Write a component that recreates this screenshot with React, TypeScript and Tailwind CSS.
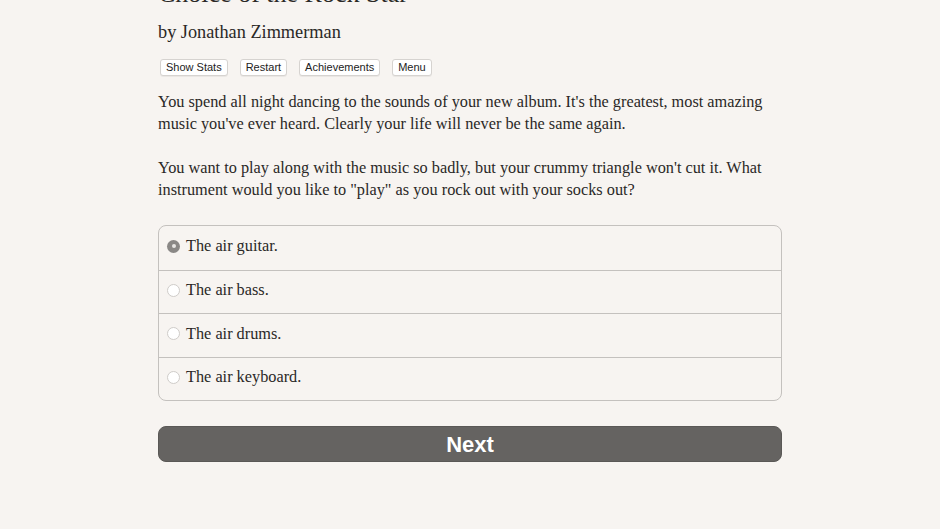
import { useState } from "react";

const opcoes = ["The air guitar.", "The air bass.", "The air drums.", "The air keyboard."];

const App = () => {
  const [escolhida, setEscolhida] = useState(0);

  return (
    <div className="min-h-screen w-full bg-[#f7f4f1] overflow-hidden text-[#2a2826] font-['Liberation_Serif',serif]">
      <div className="mx-auto w-[624px]">
        <h1 className="mt-[-21px] h-[30px] leading-[30px] text-[26px] font-normal">Choice of the Rock Star</h1>
        <div className="mt-[11px] h-[24px] leading-[24px] text-[18.3px]">by Jonathan Zimmerman</div>

        {/* botoes */}
        <div className="mt-[15px] flex gap-[12px] pl-[2px] font-['Liberation_Sans',sans-serif]">
          {["Show Stats", "Restart", "Achievements", "Menu"].map((b) => (
            <button
              key={b}
              className="h-[17px] px-[5px] text-[11px] leading-[15px] bg-white border border-[#d6d3d0] rounded-[3px] text-[#222] shadow-[0_1px_0_rgba(0,0,0,0.05)]"
            >
              {b}
            </button>
          ))}
        </div>

        <p className="mt-[15px] text-[16.3px] leading-[22px]">
          You spend all night dancing to the sounds of your new album. It's the greatest, most amazing music you've ever heard. Clearly your life will never be the same again.
        </p>
        <p className="mt-[22px] text-[16.3px] leading-[22px]">
          You want to play along with the music so badly, but your crummy triangle won't cut it. What instrument would you like to "play" as you rock out with your socks out?
        </p>

        {/* opcoes */}
        <div className="mt-[24px] border border-[#c4c1be] rounded-[8px] overflow-hidden">
          {opcoes.map((op, i) => (
            <label
              key={op}
              onClick={() => setEscolhida(i)}
              className={`flex items-center h-[43.5px] pl-[8px] pb-[3px] cursor-pointer ${i > 0 ? "border-t border-[#c4c1be]" : ""}`}
            >
              {escolhida === i ? (
                <span className="w-[13px] h-[13px] rounded-full bg-[#8a8886] flex items-center justify-center">
                  <span className="w-[4px] h-[4px] rounded-full bg-[#e8e6e4]" />
                </span>
              ) : (
                <span className="w-[13px] h-[13px] rounded-full bg-white border border-[#cfccc9]" />
              )}
              <span className="ml-[6px] text-[16.3px]">{op}</span>
            </label>
          ))}
        </div>

        <button className="mt-[25px] w-full h-[36px] rounded-[8px] bg-[#656361] text-white text-[22px] font-bold font-['Liberation_Sans',sans-serif] border border-[#5a5856]">
          Next
        </button>
      </div>
    </div>
  );
};

export default App;
